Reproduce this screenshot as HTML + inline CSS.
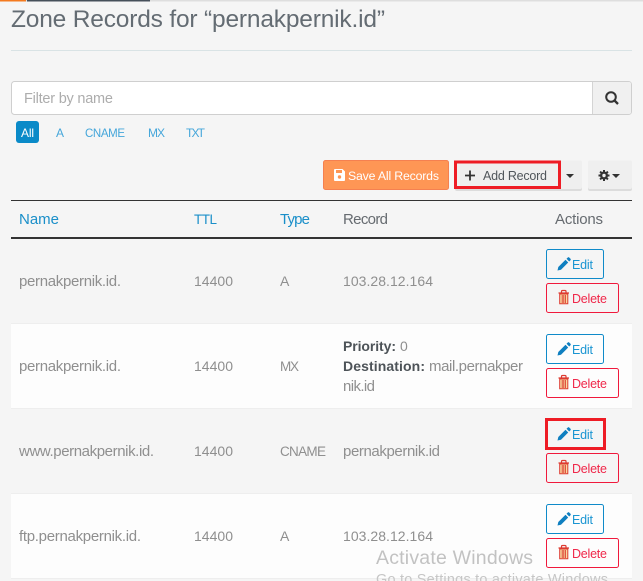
<!DOCTYPE html>
<html><head><meta charset="utf-8">
<style>
html,body{margin:0;padding:0;width:643px;height:581px;overflow:hidden;background:#f5f5f5}
svg{display:block;position:absolute;left:0;top:0}
text{font-family:"Liberation Sans",sans-serif;font-size:14px;fill:#8f8f8f}
.l{font-size:15px}
.h{fill:#1a8fc9;font-size:15px}
.d{fill:#666b70;font-size:15px}
.b{font-weight:bold;fill:#4d5358}
.f{font-size:12px;fill:#45a6da}
</style></head><body>
<svg width="643" height="581" viewBox="0 0 643 581" xmlns="http://www.w3.org/2000/svg">
<defs>
<g id="edit"><rect x=".5" y=".5" width="57" height="29" rx="2" fill="none" stroke="#0f8ac9"/>
<path d="M11.500 21.500l.8-3.500 7.200-7.200 2.700 2.700-7.200 7.200zM20.500 9.800l1.300-1.300a1 1 0 0 1 1.400 0l1.300 1.300a1 1 0 0 1 0 1.400l-1.300 1.300z" fill="#0f7fc0"/>
<text x="26" y="20" style="font-size:12.500px;fill:#1a95d2" textLength="21" lengthAdjust="spacing">Edit</text></g>
<g id="del"><rect x=".5" y=".5" width="72" height="29" rx="2" fill="none" stroke="#f0193c"/>
<path d="M12.500 10h10.500M15.500 10V8.500a1 1 0 0 1 1-1h2.500a1 1 0 0 1 1 1V10" stroke="#dd3a30" stroke-width="1.200" fill="none"/>
<path d="M13.700 11h8.100v9.800h-8.100z" fill="#f8d9a0" stroke="#dd3a30"/>
<path d="M16.200 12v8M17.800 12v8M19.400 12v8" stroke="#dd3a30" stroke-width=".9"/>
<text x="26" y="20" style="font-size:12.500px;fill:#f0284a" textLength="35" lengthAdjust="spacing">Delete</text></g>
</defs>

<rect width="643" height="581" fill="#f5f5f5"/>
<rect width="643" height="1.500" fill="#dedede"/>
<rect width="26" height="1.500" fill="#f47a20"/>
<rect x="27" width="123" height="1.500" fill="#46505a"/>

<text x="11" y="27" style="font-size:24.500px;fill:#646c73" textLength="374" lengthAdjust="spacing">Zone Records for “pernakpernik.id”</text>
<rect x="11" y="50" width="621" height="1" fill="#d9e3e5"/>

<rect x="11.500" y="81.500" width="620" height="33" rx="3" fill="#fff" stroke="#cfcfcf"/>
<path d="M592 82h37a2 2 0 0 1 2 2v28a2 2 0 0 1-2 2h-37z" fill="#f0f0f0"/>
<rect x="592" y="82" width="1" height="32" fill="#d4d4d4"/>
<circle cx="611" cy="97" r="4.800" fill="none" stroke="#333" stroke-width="2"/>
<path d="M614.500 100.500l3.500 3.500" stroke="#333" stroke-width="2.300"/>
<text x="24" y="103" style="font-size:14.500px;fill:#adadad" textLength="89" lengthAdjust="spacing">Filter by name</text>

<rect x="16" y="121" width="23" height="22" rx="3" fill="#0a8ac8"/>
<text x="21" y="137" class="f" style="fill:#fff" textLength="13" lengthAdjust="spacing">All</text>
<text x="56" y="137" class="f" textLength="7" lengthAdjust="spacing">A</text>
<text x="85" y="137" class="f" style="font-size:11.500px" textLength="40" lengthAdjust="spacing">CNAME</text>
<text x="148" y="137" class="f" textLength="17" lengthAdjust="spacing">MX</text>
<text x="186" y="137" class="f" textLength="19" lengthAdjust="spacing">TXT</text>

<rect x="323.500" y="160.500" width="125" height="29" rx="2" fill="#fe9655" stroke="#f58050"/>
<path d="M334 170a1 1 0 0 1 1-1h7.500l2.500 2.500V180a1 1 0 0 1-1 1h-9a1 1 0 0 1-1-1z" fill="#fff"/>
<rect x="336" y="170" width="6" height="3" fill="#fe9655"/>
<circle cx="339.500" cy="177" r="1.700" fill="#fe9655"/>
<text x="348" y="180" style="font-size:12.300px;fill:#fff" textLength="91" lengthAdjust="spacing">Save All Records</text>

<rect x="455" y="161" width="127" height="30" rx="2" fill="#c4c4c4" opacity=".5"/>
<rect x="455" y="160.500" width="127" height="28.500" rx="2" fill="#efefef"/>
<rect x="455.500" y="162" width="104" height="25.500" fill="#efefef" stroke="#ee1c25" stroke-width="3"/>
<path d="M465 175.500h10M470 170.500v10" stroke="#333" stroke-width="1.800"/>
<text x="483" y="180" style="font-size:12.500px;fill:#50565b" textLength="64" lengthAdjust="spacing">Add Record</text>
<path d="M566 174h8l-4 4z" fill="#333"/>

<rect x="588" y="161" width="44" height="30" rx="2" fill="#c4c4c4" opacity=".5"/>
<rect x="588" y="160.500" width="44" height="28.500" rx="2" fill="#efefef"/>
<path d="M604 170v11M598.500 175.500h11M600.100 171.600l7.800 7.800M607.900 171.600l-7.800 7.800" stroke="#333" stroke-width="2"/>
<circle cx="604" cy="175.500" r="4" fill="#333"/>
<circle cx="604" cy="175.500" r="1.700" fill="#efefef"/>
<path d="M612 174h8l-4 4z" fill="#333"/>

<rect x="11" y="200" width="621" height="1" fill="#333"/>
<text x="19" y="224" class="h" textLength="40" lengthAdjust="spacing">Name</text>
<text x="194" y="224" class="h" style="font-size:13.500px" textLength="23" lengthAdjust="spacing">TTL</text>
<text x="280" y="224" class="h" textLength="30" lengthAdjust="spacing">Type</text>
<text x="343" y="224" class="d" textLength="45" lengthAdjust="spacing">Record</text>
<text x="555" y="224" class="d" textLength="48" lengthAdjust="spacing">Actions</text>
<rect x="11" y="237" width="621" height="2" fill="#333"/>

<rect x="11" y="323" width="621" height="85" fill="#fdfdfd"/>
<rect x="11" y="493" width="621" height="85" fill="#fdfdfd"/>
<rect x="11" y="323" width="621" height="1" fill="#eeeeee"/>
<rect x="11" y="408" width="621" height="1" fill="#eeeeee"/>
<rect x="11" y="493" width="621" height="1" fill="#eeeeee"/>
<rect x="11" y="578" width="621" height="1" fill="#eeeeee"/>

<text x="19" y="286" class="l" textLength="102" lengthAdjust="spacing">pernakpernik.id.</text>
<text x="194" y="286" textLength="39" lengthAdjust="spacing">14400</text>
<text x="280" y="286" textLength="8" lengthAdjust="spacing">A</text>
<text x="343" y="286" textLength="90" lengthAdjust="spacing">103.28.12.164</text>

<text x="19" y="371" class="l" textLength="102" lengthAdjust="spacing">pernakpernik.id.</text>
<text x="194" y="371" textLength="39" lengthAdjust="spacing">14400</text>
<text x="280" y="371" style="font-size:13.500px" textLength="19" lengthAdjust="spacing">MX</text>
<text x="343" y="351" class="b" textLength="53" lengthAdjust="spacing">Priority:</text>
<text x="400" y="351" textLength="8" lengthAdjust="spacing">0</text>
<text x="343" y="371" class="b" textLength="82" lengthAdjust="spacing">Destination:</text>
<text x="429" y="371" class="l" textLength="94" lengthAdjust="spacing">mail.pernakper</text>
<text x="343" y="391" class="l" textLength="32" lengthAdjust="spacing">nik.id</text>

<text x="19" y="456" class="l" textLength="135" lengthAdjust="spacing">www.pernakpernik.id.</text>
<text x="194" y="456" textLength="39" lengthAdjust="spacing">14400</text>
<text x="280" y="456" style="font-size:13.500px" textLength="46" lengthAdjust="spacing">CNAME</text>
<text x="343" y="456" class="l" textLength="97" lengthAdjust="spacing">pernakpernik.id</text>

<text x="19" y="541" class="l" textLength="122" lengthAdjust="spacing">ftp.pernakpernik.id.</text>
<text x="194" y="541" textLength="39" lengthAdjust="spacing">14400</text>
<text x="280" y="541" textLength="8" lengthAdjust="spacing">A</text>
<text x="343" y="541" textLength="90" lengthAdjust="spacing">103.28.12.164</text>

<use href="#edit" x="546" y="249"/>
<use href="#del" x="546" y="283"/>
<use href="#edit" x="546" y="334"/>
<use href="#del" x="546" y="368"/>
<use href="#edit" x="546" y="419"/>
<rect x="546.500" y="419.500" width="58" height="29" fill="none" stroke="#ee1c25" stroke-width="3"/>
<use href="#del" x="546" y="453"/>
<use href="#edit" x="546" y="504"/>
<use href="#del" x="546" y="538"/>

<text x="376" y="564" style="font-size:19.500px;fill:#c2c2c2" textLength="157" lengthAdjust="spacing">Activate Windows</text>
<text x="376" y="584" style="font-size:14.500px;fill:#c6c6c6" textLength="232" lengthAdjust="spacing">Go to Settings to activate Windows</text>
</svg>
</body></html>
